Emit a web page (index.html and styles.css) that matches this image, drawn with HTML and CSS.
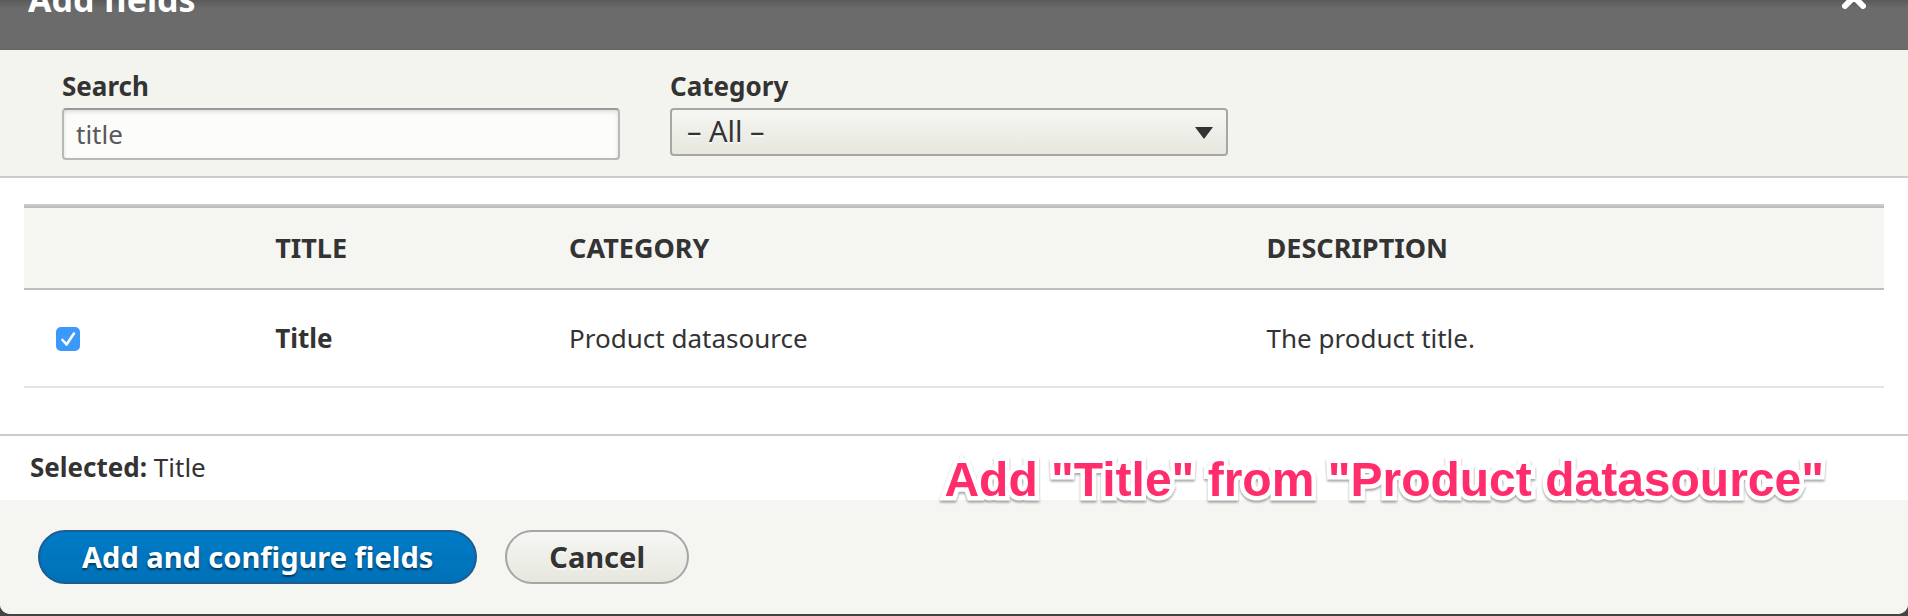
FILE: index.html
```html
<!DOCTYPE html>
<html lang="en">
<head>
<meta charset="utf-8">
<title>Add fields</title>
<link rel="stylesheet" href="styles.css">
</head>
<body>
<main class="dialog">
  <header class="dialog-header">
    <h1 class="dialog-title">Add fields</h1>
    <button class="close" type="button" aria-label="Close">
      <svg width="24" height="24" viewBox="0 0 24 24" fill="none" stroke="#fff" stroke-width="6" stroke-linecap="round" aria-hidden="true"><path d="M3 3l18 18M21 3L3 21"/></svg>
    </button>
  </header>
  <form class="dialog-form">
    <div class="filters">
      <div class="field">
        <label class="label" for="search">Search</label>
        <input class="text-input" id="search" type="text" value="title">
      </div>
      <div class="field">
        <label class="label" for="category">Category</label>
        <div class="select-wrap">
          <select class="select" id="category"><option>– All –</option></select>
          <svg class="arrow" width="18" height="12" viewBox="0 0 18 12" aria-hidden="true"><path d="M0 0h18L9 12z" fill="#333"/></svg>
        </div>
      </div>
    </div>
    <div class="results">
      <table class="table">
        <colgroup><col class="col-check"><col class="col-title"><col class="col-category"><col></colgroup>
        <thead>
          <tr><th scope="col"></th><th scope="col">Title</th><th scope="col">Category</th><th scope="col">Description</th></tr>
        </thead>
        <tbody>
          <tr>
            <td><input class="check" id="row-title" type="checkbox" checked></td>
            <td><label class="row-label" for="row-title">Title</label></td>
            <td>Product datasource</td>
            <td>The product title.</td>
          </tr>
        </tbody>
      </table>
    </div>
    <div class="selected"><strong>Selected:</strong> Title</div>
    <footer class="actions">
      <button class="button button-primary" type="button">Add and configure fields</button>
      <button class="button" type="button">Cancel</button>
      <p class="note">Add "Title" from "Product datasource"</p>
    </footer>
  </form>
</main>
</body>
</html>
```
FILE: styles.css
```css
* { box-sizing: border-box; }

body {
  margin: 0;
  background: #444;
  color: #333;
  font: 26px/36px "Noto Sans", "Open Sans", sans-serif;
}

.dialog {
  background: #fff;
  border-radius: 0 0 10px 10px;
  overflow: hidden;
}

.dialog-header {
  display: flex;
  justify-content: space-between;
  align-items: flex-end;
  height: 50px;
  padding: 0 42px 32px 28px;
  background: linear-gradient(#5a5a5a, #6b6b6b 8px);
  border-bottom: 1px solid #666;
  overflow: hidden;
}

.dialog-title {
  margin: 0;
  color: #fff;
  font-size: 34px;
  font-weight: 700;
  line-height: 36px;
}

.close {
  display: flex;
  margin: 0;
  padding: 0 0 8px;
  border: 0;
  background: none;
}

.filters {
  display: flex;
  gap: 50px;
  padding: 18px 62px 16px;
  background: #f3f4ee;
  border-bottom: 2px solid #ccc;
}

.field { width: 558px; }

.label {
  display: block;
  margin-bottom: 4px;
  font-weight: 700;
}

.text-input {
  display: block;
  width: 100%;
  height: 52px;
  padding: 0 12px;
  border: 2px solid #b8b8b8;
  border-top-color: #999;
  border-radius: 4px;
  background: #fcfcfa;
  box-shadow: inset 0 2px 4px rgba(0, 0, 0, 0.125);
  color: #595959;
  font: inherit;
}

.select-wrap { position: relative; }

.select {
  display: block;
  appearance: none;
  width: 100%;
  height: 48px;
  padding: 0 48px 2px 15px;
  border: 2px solid #a6a6a6;
  border-radius: 4px;
  background: linear-gradient(#f6f6f3, #e7e7df);
  color: #333;
  font: 29px/36px "Noto Sans", "Open Sans", sans-serif;
  text-shadow: 0 2px rgba(255, 255, 255, 0.6);
}

.arrow {
  position: absolute;
  top: 19px;
  right: 15px;
  pointer-events: none;
}

.results { padding: 26px 24px 46px; }

.table {
  width: 100%;
  table-layout: fixed;
  border-spacing: 0;
  border-top: 2px solid #ccc;
}

.col-check { width: 12%; }
.col-title { width: 15.8%; }
.col-category { width: 37.5%; }

.table th,
.table td {
  height: 84px;
  padding: 0 28px;
  text-align: left;
}

.table th {
  background: #f5f5f1;
  border-top: 2px solid #bebfb9;
  border-bottom: 2px solid #bebfb9;
  font-size: 27px;
  font-weight: 700;
  text-transform: uppercase;
}

.table td {
  height: 98px;
  border-bottom: 2px solid #e6e4df;
}

.check {
  display: block;
  appearance: none;
  width: 24px;
  height: 24px;
  margin: 6px 4px 4px;
  border-radius: 5px;
  background: #3b99fc url("data:image/svg+xml,%3Csvg xmlns='http://www.w3.org/2000/svg' viewBox='0 0 24 24' fill='none' stroke='white' stroke-width='2.6' stroke-linecap='round' stroke-linejoin='round'%3E%3Cpath d='M6.5 13l4 4.5L18 6.5'/%3E%3C/svg%3E");
}

.row-label { font-weight: 700; }

.selected {
  padding: 13px 30px 15px;
  border-top: 2px solid #ccc;
}

.selected strong { font-weight: 700; }

.actions {
  position: relative;
  display: flex;
  gap: 28px;
  padding: 30px 38px;
  background: #f5f5f1;
}

.button {
  height: 54px;
  padding: 0 42px;
  border: 2px solid #a6a6a6;
  border-radius: 27px;
  background: linear-gradient(#f6f6f3, #e7e7df);
  color: #333;
  font: 700 29px/36px "Noto Sans", "Open Sans", sans-serif;
  text-shadow: 0 2px rgba(255, 255, 255, 0.6);
}

.button-primary {
  border-color: #1e5c90;
  background: linear-gradient(#007bc6, #0071b8);
  color: #fff;
  text-shadow: 0 2px 2px rgba(0, 0, 0, 0.5);
}

.note {
  position: absolute;
  top: -48px;
  right: 84px;
  margin: 0;
  color: #ff2d6c;
  font: bold 48px/56px "Liberation Sans", Arial, sans-serif;
  white-space: nowrap;
  -webkit-text-stroke: 9px #fff;
  stroke-linejoin: round;
  paint-order: stroke fill;
  filter: drop-shadow(0 2px 1px rgba(0, 0, 0, 0.35));
}
```
